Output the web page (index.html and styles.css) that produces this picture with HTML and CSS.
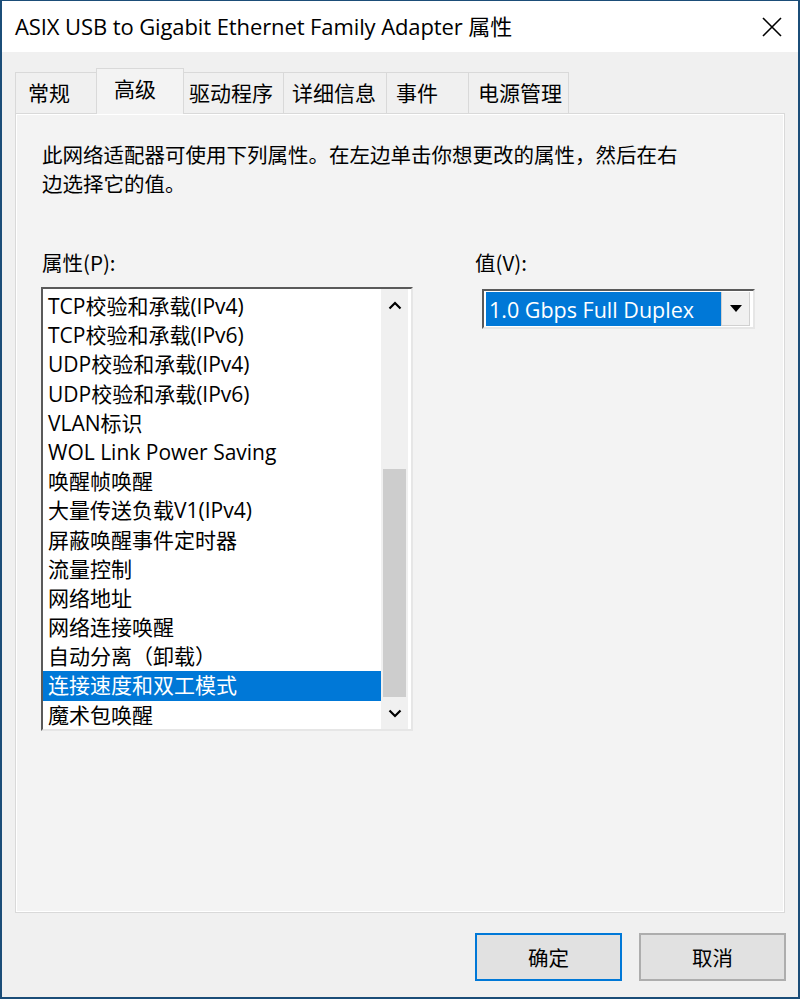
FILE: index.html
```html
<!DOCTYPE html>
<html lang="zh-CN">

    <head>
        <meta charset="UTF-8">
        <meta name="viewport" content="width=device-width, initial-scale=1.0">
        <title>ASIX USB to Gigabit Ethernet Family Adapter 属性</title>
        <link rel="stylesheet" href="styles.css">
    </head>

    <body>
        <div class="window">
            <div class="titlebar">
                <span class="title">ASIX USB to Gigabit Ethernet Family Adapter 属性</span>
                <svg class="close" width="20" height="20" viewBox="0 0 20 20">
                    <path d="M1 1 L19 19 M19 1 L1 19" stroke="#000" stroke-width="1.6" fill="none"/>
                </svg>
            </div>

            <div class="tabs">
                <div class="tab tab-general">常规</div>
                <div class="tab active">高级</div>
                <div class="tab tab-driver">驱动程序</div>
                <div class="tab tab-details">详细信息</div>
                <div class="tab tab-events">事件</div>
                <div class="tab tab-power">电源管理</div>
            </div>

            <div class="panel">
                <p class="desc">此网络适配器可使用下列属性。在左边单击你想更改的属性，然后在右<br>边选择它的值。</p>

                <div class="columns">
                    <div class="col-left">
                        <div class="label">属性(P):</div>
                        <div class="listbox">
                            <ul class="items">
                                <li>TCP校验和承载(IPv4)</li>
                                <li>TCP校验和承载(IPv6)</li>
                                <li>UDP校验和承载(IPv4)</li>
                                <li>UDP校验和承载(IPv6)</li>
                                <li>VLAN标识</li>
                                <li>WOL Link Power Saving</li>
                                <li>唤醒帧唤醒</li>
                                <li>大量传送负载V1(IPv4)</li>
                                <li>屏蔽唤醒事件定时器</li>
                                <li>流量控制</li>
                                <li>网络地址</li>
                                <li>网络连接唤醒</li>
                                <li>自动分离（卸载）</li>
                                <li class="selected">连接速度和双工模式</li>
                                <li>魔术包唤醒</li>
                            </ul>
                            <div class="scrollbar">
                                <div class="arrow">
                                    <svg width="14" height="9" viewBox="0 0 14 9">
                                        <path d="M1.5 7.5 L7 2 L12.5 7.5" stroke="#000" stroke-width="2.2" fill="none"/>
                                    </svg>
                                </div>
                                <div class="track">
                                    <div class="thumb"></div>
                                </div>
                                <div class="arrow">
                                    <svg width="14" height="9" viewBox="0 0 14 9">
                                        <path d="M1.5 1.5 L7 7 L12.5 1.5" stroke="#000" stroke-width="2.2" fill="none"/>
                                    </svg>
                                </div>
                            </div>
                        </div>
                    </div>

                    <div class="col-right">
                        <div class="label">值(V):</div>
                        <div class="combo">
                            <div class="combo-value">1.0 Gbps Full Duplex</div>
                            <div class="combo-btn">
                                <svg width="12" height="7" viewBox="0 0 12 7">
                                    <path d="M0 0 L12 0 L6 7 Z" fill="#000"/>
                                </svg>
                            </div>
                        </div>
                    </div>
                </div>
            </div>

            <div class="buttons">
                <button class="btn btn-default">确定</button>
                <button class="btn">取消</button>
            </div>
        </div>
    </body>

</html>
```

FILE: styles.css
```css
body {
    margin: 0;
    font-family: "Open Sans", "Noto Sans CJK SC", sans-serif;
    color: #000;
}

.window {
    width: 800px;
    height: 999px;
    box-sizing: border-box;
    background-color: #f0f0f0;
    border: 2px solid #1b4d78;
    border-top-width: 1px;
    display: flex;
    flex-direction: column;
}

.titlebar {
    height: 51px;
    box-sizing: border-box;
    background-color: #fff;
    display: flex;
    align-items: center;
    justify-content: space-between;
    padding: 0 16px 3px 13px;
    flex-shrink: 0;
}

.title {
    font-size: 22px;
    letter-spacing: -0.1px;
}

.close {
    display: block;
    margin-top: 3px;
}

.tabs {
    display: flex;
    align-items: flex-end;
    margin: 15px 0 0 13px;
    height: 46px;
    position: relative;
    z-index: 1;
}

.tab {
    height: 41px;
    box-sizing: border-box;
    border: 1px solid #d9d9d9;
    border-bottom: none;
    border-left: none;
    background-color: #f0f0f0;
    font-family: "Noto Sans CJK SC", sans-serif;
    font-size: 21px;
    line-height: 38px;
    padding: 0 0 0 12px;
}

.tab-general {
    width: 82px;
    border-left: 1px solid #d9d9d9;
}

.tab.active {
    width: 88px;
    height: 46px;
    margin-bottom: -1px;
    background-color: #f3f3f3;
    border-left: 1px solid #d9d9d9;
    margin-left: -1px;
    padding-left: 17px;
}

.tab-driver {
    width: 100px;
    padding-left: 5px;
}

.tab-details {
    width: 103px;
    padding-left: 8px;
}

.tab-events {
    width: 82px;
    padding-left: 9px;
}

.tab-power {
    width: 100px;
    padding-left: 9px;
}

.panel {
    margin: 0 13px;
    height: 800px;
    box-sizing: border-box;
    border: 1px solid #d9d9d9;
    box-shadow: inset 0 0 0 1px #fff;
    background-color: #f3f3f3;
    padding: 26px 0 0 26px;
}

.desc {
    margin: 0;
    font-family: "Noto Sans CJK SC", sans-serif;
    font-size: 20.5px;
    line-height: 29px;
}

.columns {
    display: flex;
    margin-top: 50px;
}

.label {
    font-family: "Noto Sans CJK SC", sans-serif;
    font-size: 20.5px;
    line-height: 29px;
    margin-bottom: 10px;
}

.col-left {
    width: 433px;
}

.col-right {
    display: flex;
    flex-direction: column;
}

.listbox {
    width: 372px;
    height: 444px;
    box-sizing: border-box;
    border-style: solid;
    border-width: 2px;
    border-color: #5a5a5a #e6e6e6 #e6e6e6 #5a5a5a;
    background-color: #fff;
    display: flex;
    margin-left: -1px;
}

.items {
    list-style: none;
    margin: 0;
    padding: 3px 0 0;
    flex: 1;
}

.items li {
    height: 29.2px;
    line-height: 29px;
    font-size: 21px;
    padding-left: 5px;
    white-space: nowrap;
}

.items li.selected {
    background-color: #0078d7;
    color: #fff;
}

.scrollbar {
    width: 27px;
    margin: 0 3px 0 0;
    background-color: #f0f0f0;
    display: flex;
    flex-direction: column;
}

.arrow {
    height: 32px;
    display: flex;
    align-items: center;
    justify-content: center;
}

.track {
    flex: 1;
    display: flex;
    flex-direction: column;
    justify-content: flex-end;
    padding: 0 2px;
}

.thumb {
    height: 228px;
    background-color: #cdcdcd;
}

.combo {
    width: 273px;
    height: 40px;
    box-sizing: border-box;
    margin: 2px 0 0 7px;
    border-style: solid;
    border-width: 2px;
    border-color: #5a5a5a #e6e6e6 #e6e6e6 #5a5a5a;
    background-color: #fff;
    display: flex;
    padding: 1px 3px 1px 2px;
}

.combo-value {
    flex: 1;
    background-color: #0078d7;
    color: #fff;
    font-size: 21.5px;
    line-height: 36px;
    padding-left: 3px;
    white-space: nowrap;
}

.combo-btn {
    width: 27px;
    background-color: #f0f0f0;
    border: 1px solid #d0d0d0;
    border-top: none;
    display: flex;
    align-items: center;
    justify-content: center;
}

.buttons {
    display: flex;
    justify-content: flex-end;
    gap: 17px;
    margin: 20px 12px 0 0;
}

.btn {
    width: 147px;
    height: 48px;
    background-color: #e1e1e1;
    border: 2px solid #adadad;
    font-family: "Noto Sans CJK SC", sans-serif;
    font-size: 20.5px;
    color: #000;
    padding: 0;
}

.btn-default {
    border-color: #0078d7;
}
```
